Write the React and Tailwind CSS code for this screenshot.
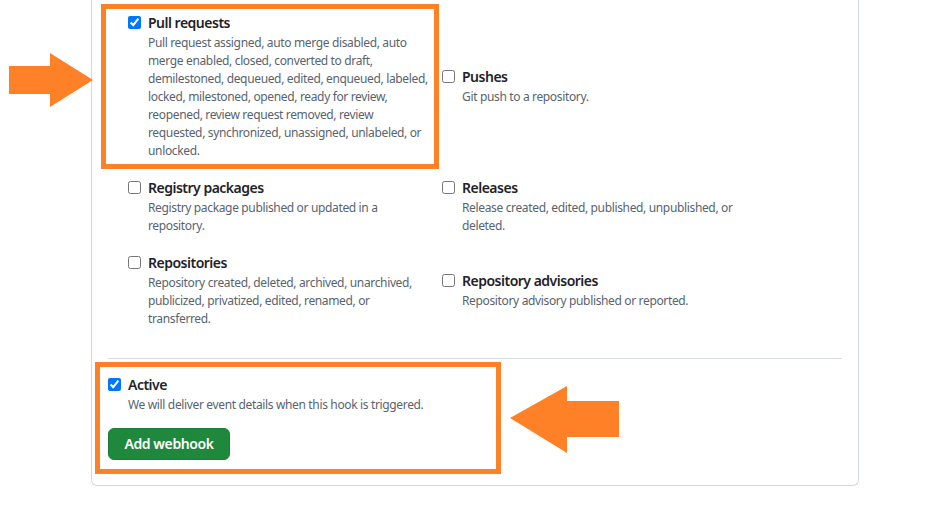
import React from 'react'

const events = [
  {
    title: 'Pull requests',
    lines: [
      'Pull request assigned, auto merge disabled, auto',
      'merge enabled, closed, converted to draft,',
      'demilestoned, dequeued, edited, enqueued, labeled,',
      'locked, milestoned, opened, ready for review,',
      'reopened, review request removed, review',
      'requested, synchronized, unassigned, unlabeled, or',
      'unlocked.',
    ],
    checked: true,
  },
  { title: 'Pushes', lines: ['Git push to a repository.'] },
  { title: 'Registry packages', lines: ['Registry package published or updated in a', 'repository.'] },
  { title: 'Releases', lines: ['Release created, edited, published, unpublished, or', 'deleted.'] },
  {
    title: 'Repositories',
    lines: [
      'Repository created, deleted, archived, unarchived,',
      'publicized, privatized, edited, renamed, or',
      'transferred.',
    ],
  },
  { title: 'Repository advisories', lines: ['Repository advisory published or reported.'] },
]

const CheckItem = ({ title, lines, checked }) => (
  <div className="flex">
    <input
      type="checkbox"
      defaultChecked={checked}
      className="mt-[3px] mr-[7px] w-[13px] h-[13px] shrink-0 accent-[#0075ff]"
    />
    <div>
      <div className="text-sm font-semibold leading-5 tracking-[-0.5px] text-[#1f2328]">{title}</div>
      <p className="mt-px text-xs leading-[18px] tracking-[-0.35px] text-[#59636e]">
        {lines.map((l) => (
          <span key={l} className="block whitespace-nowrap">{l}</span>
        ))}
      </p>
    </div>
  </div>
)

const App = () => {
  return (
    <div className="relative w-[950px] h-[520px] bg-white overflow-hidden font-['Segoe_UI','Noto_Sans',sans-serif]">
      <div className="mx-auto w-[768px] border-x border-b border-[#d1d9e0] rounded-b-md px-4 pb-[25px]">
        <ul className="ml-5 pt-[13px] grid grid-cols-[314px_314px] gap-y-[18px] items-center">
          {events.map((e) => (
            <li key={e.title}>
              <CheckItem {...e} />
            </li>
          ))}
        </ul>

        <div className="mt-[30px] border-t border-[#d8dee4]" />

        <div className="pt-4">
          <CheckItem
            title="Active"
            lines={['We will deliver event details when this hook is triggered.']}
            checked
          />
          <button className="mt-[14px] w-[122px] h-8 rounded-md bg-[#1f883d] border border-[#1a7f37] text-white text-sm font-semibold tracking-[-0.4px]">
            Add webhook
          </button>
        </div>
      </div>

      {/* annotations drawn over the screenshot */}
      <div className="absolute left-[101px] top-[4px] w-[338px] h-[165px] border-[5px] border-[#fe8127]" />
      <div className="absolute left-[95px] top-[362px] w-[406px] h-[112px] border-[5px] border-[#fe8127]" />
      <svg className="absolute left-0 top-0" width="100" height="110" viewBox="0 0 100 110">
        <polygon points="9,66 50,66 50,53 93,80 50,107 50,94 9,94" fill="#fe8127" />
      </svg>
      <svg className="absolute left-[500px] top-[380px]" width="130" height="80" viewBox="500 380 130 80">
        <polygon points="510,418 567,386 567,401 619,401 619,437 567,437 567,453" fill="#fe8127" />
      </svg>
    </div>
  )
}

export default App
